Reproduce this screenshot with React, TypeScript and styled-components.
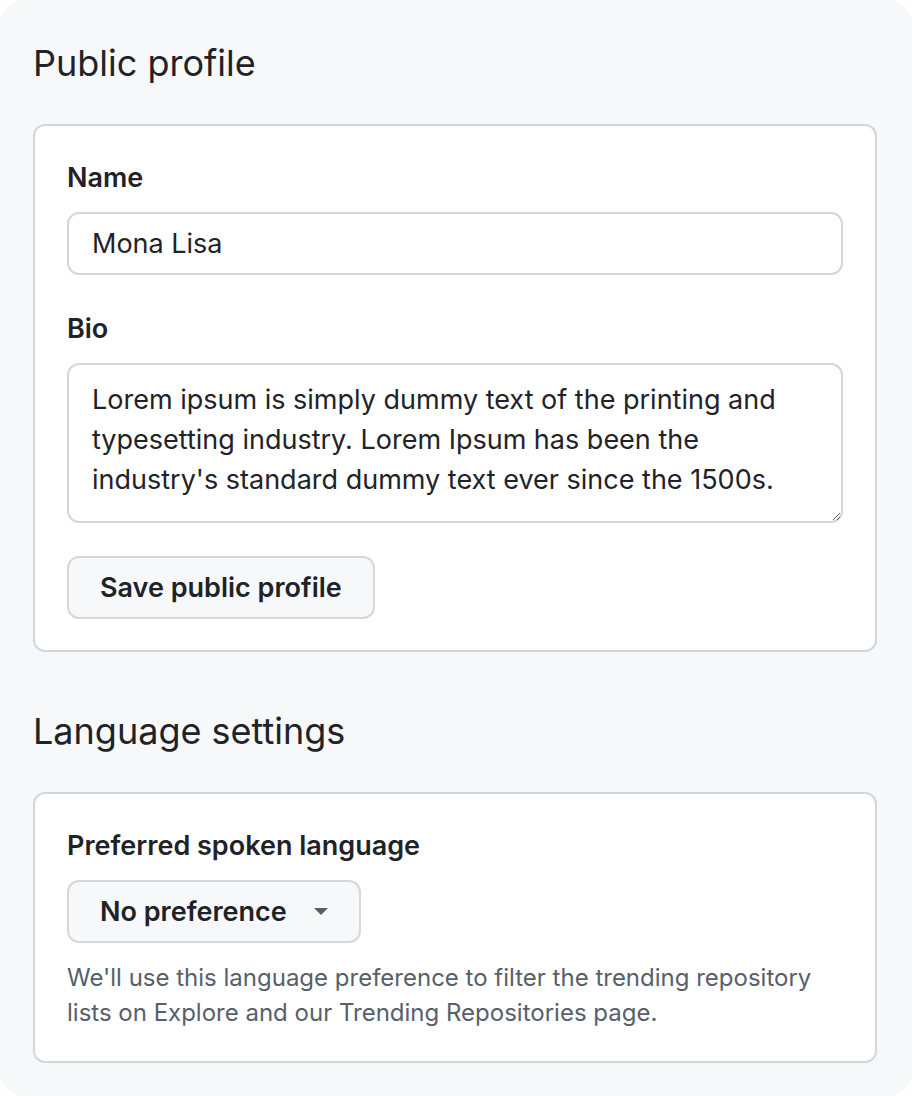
import { createGlobalStyle } from "styled-components";
import styled from "styled-components";

const GlobalStyle = createGlobalStyle`
  * {
    box-sizing: border-box;
  }
  body {
    margin: 0;
    background: #ffffff;
    font-family: Inter, "Noto Sans", "Liberation Sans", sans-serif;
    color: #1f2328;
  }
`;

const Page = styled.div`
  height: 1096px;
  background: #f6f8fa;
  border-radius: 24px;
  padding: 39px 35px 35px 33px;
  display: flex;
  flex-direction: column;
`;

const SectionTitle = styled.h2<{ $spaced?: boolean }>`
  margin: ${(p) => (p.$spaced ? "55px" : "0")} 0 36px;
  font-size: 36px;
  line-height: 49px;
  font-weight: 400;
  color: #1f2328;
`;

const Card = styled.section`
  background: #ffffff;
  border: 2px solid #d0d7de;
  border-radius: 12px;
  padding: 34px 32px 31px;
  display: flex;
  flex-direction: column;
  align-items: flex-start;
`;

const Label = styled.label<{ $first?: boolean }>`
  display: block;
  margin-top: ${(p) => (p.$first ? "0" : "36px")};
  margin-bottom: 16px;
  font-size: 27px;
  line-height: 36px;
  font-weight: 600;
`;

const TextInput = styled.input`
  display: block;
  width: 100%;
  height: 63px;
  padding: 0 23px;
  border: 2px solid #d0d7de;
  border-radius: 12px;
  background: #ffffff;
  font-family: inherit;
  font-size: 27px;
  color: #1f2328;
  outline: none;
`;

const TextArea = styled.textarea`
  display: block;
  width: 100%;
  height: 160px;
  padding: 15px 23px;
  border: 2px solid #d0d7de;
  border-radius: 12px;
  background: #ffffff;
  font-family: inherit;
  font-size: 27px;
  line-height: 40px;
  color: #1f2328;
  resize: vertical;
  outline: none;
`;

const Button = styled.button`
  margin-top: 33px;
  height: 63px;
  padding: 0 31px;
  display: inline-flex;
  align-items: center;
  gap: 27px;
  background: #f6f8fa;
  border: 2px solid #d5d8da;
  border-radius: 12px;
  font-family: inherit;
  font-size: 27px;
  font-weight: 600;
  color: #1f2328;
  cursor: pointer;
`;

const SelectButton = styled(Button)`
  margin-top: 0;
`;

const Caret = styled.span`
  width: 0;
  height: 0;
  border-left: 7px solid transparent;
  border-right: 7px solid transparent;
  border-top: 7px solid #57606a;
`;

const Note = styled.p`
  margin: 17px 0 0;
  font-size: 24px;
  line-height: 35px;
  color: #57606a;
`;

export default function App() {
  return (
    <>
      <GlobalStyle />
      <Page>
        <SectionTitle>Public profile</SectionTitle>
        <Card>
          <Label $first htmlFor="name">
            Name
          </Label>
          <TextInput id="name" type="text" defaultValue="Mona Lisa" />
          <Label htmlFor="bio">Bio</Label>
          <TextArea
            id="bio"
            defaultValue="Lorem ipsum is simply dummy text of the printing and typesetting industry. Lorem Ipsum has been the industry's standard dummy text ever since the 1500s."
          />
          <Button type="button">Save public profile</Button>
        </Card>

        <SectionTitle $spaced>Language settings</SectionTitle>
        <Card>
          <Label $first>Preferred spoken language</Label>
          <SelectButton type="button">
            No preference
            <Caret />
          </SelectButton>
          <Note>
            We'll use this language preference to filter the trending repository
            lists on Explore and our Trending Repositories page.
          </Note>
        </Card>
      </Page>
    </>
  );
}
